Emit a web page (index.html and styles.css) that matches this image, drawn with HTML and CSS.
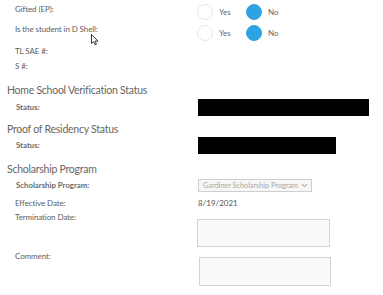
FILE: index.html
```html
<!DOCTYPE html>
<html>
<head>
<meta charset="utf-8">
<link rel="stylesheet" href="styles.css">
</head>
<body>
<div class="page">
  <div class="row row-gifted">
    <div class="label">Gifted (EP):</div>
    <div class="radios">
      <span class="radio"></span><span class="opt">Yes</span>
      <span class="radio on"></span><span class="opt">No</span>
    </div>
  </div>
  <div class="row row-shell">
    <div class="label">Is the student in D Shell:</div>
    <div class="radios">
      <span class="radio"></span><span class="opt">Yes</span>
      <span class="radio on"></span><span class="opt">No</span>
    </div>
  </div>
  <div class="row row-small"><div class="label">TL SAE #:</div></div>
  <div class="row row-small"><div class="label">S #:</div></div>

  <h2 class="heading h-home">Home School Verification Status</h2>
  <div class="row row-status s1">
    <div class="label bold">Status:</div>
    <div class="redact r1"></div>
  </div>

  <h2 class="heading h-proof">Proof of Residency Status</h2>
  <div class="row row-status s2">
    <div class="label bold">Status:</div>
    <div class="redact r2"></div>
  </div>

  <h2 class="heading h-schol">Scholarship Program</h2>
  <div class="row row-prog">
    <div class="label bold">Scholarship Program:</div>
    <div class="select"><span>Gardiner Scholarship Program</span><svg class="chev" width="7" height="5" viewBox="0 0 7 5"><path d="M1 1.2 L3.5 3.6 L6 1.2" fill="none" stroke="#888" stroke-width="1"/></svg></div>
  </div>
  <div class="row row-eff">
    <div class="label">Effective Date:</div>
    <div class="value">8/19/2021</div>
  </div>
  <div class="row row-term">
    <div class="label">Termination Date:</div>
    <div class="box b1"></div>
  </div>
  <div class="row row-comment">
    <div class="label">Comment:</div>
    <div class="box b2"></div>
  </div>

  <svg class="cursor" width="9" height="12" viewBox="0 0 9 12"><path d="M0.5 0.5 L0.5 9.5 L2.6 7.6 L4 10.8 L5.4 10.2 L4.1 7.1 L7 7.1 Z" fill="#fff" stroke="#222" stroke-width="0.9" stroke-linejoin="round"/></svg>
</div>
</body>
</html>
```

FILE: styles.css
```css
* { box-sizing: border-box; }
html, body { margin: 0; padding: 0; background: #fff; }
body {
  font-family: Lato, "Open Sans", "Liberation Sans", sans-serif;
  color: #5a5a5a;
  width: 383px;
  height: 295px;
  overflow: hidden;
}
.page { position: relative; }

.row { display: flex; align-items: flex-start; }
.label {
  width: 198px;
  padding-left: 15px;
  font-size: 8px;
  line-height: 10px;
  color: #606060;
  letter-spacing: -0.1px;
}
.label.bold { font-weight: 700; font-size: 7.8px; padding-left: 16px; color: #6a6a6a; letter-spacing: 0; }

.row-gifted { height: 22px; }
.row-gifted .label { padding-top: 4px; }
.row-gifted .radios { margin-top: 4px; }
.row-shell { height: 22px; }
.row-shell .label { padding-top: 2px; }
.row-shell .radios { margin-top: 3px; }
.row-small { height: 15px; }
.row-small .label { padding-top: 2px; }

.radios { display: flex; align-items: center; margin-left: -1px; }
.radio {
  width: 16px; height: 16px; border-radius: 50%;
  border: 1px solid #e6e6e6; background: #fff;
}
.radio.on { background: #2ea3e4; border-color: #2ea3e4; }
.opt { font-size: 8px; color: #666; margin-left: 6px; width: 27px; }

.heading {
  margin: 0;
  padding-left: 7px;
  font-weight: 400;
  font-size: 10.5px;
  line-height: 14px;
  color: #666;
  letter-spacing: -0.25px;
}
.h-home { margin-top: 9px; }
.h-proof { margin-top: 6px; }
.h-schol { margin-top: 8px; }

.row-status { height: 17px; align-items: center; }
.row-status .label { line-height: 17px; }
.s1 { margin-top: 2px; }
.s2 { margin-top: 1px; }
.redact { height: 17px; background: #000; }
.r1 { width: 171px; }
.r2 { width: 138px; }

.row-prog { margin-top: 3px; height: 13px; }
.row-prog .label { padding-top: 1px; }
.select {
  width: 114px; height: 13px;
  border: 1px solid #cfcfcf; background: #f7f7f7;
  display: flex; align-items: center; justify-content: space-between;
  padding: 0 3px 0 4px;
  font-size: 7.5px; color: #a8a8a8; letter-spacing: -0.1px;
}
.chev { display: block; }

.row-eff { margin-top: 6px; }
.value { font-size: 8px; line-height: 10px; color: #555; }

.row-term { margin-top: 4px; }
.b1 { margin-top: 7px; margin-left: -1px; width: 133px; height: 28px; }
.row-comment { margin-top: 4px; }
.b2 { margin-top: 6px; margin-left: 1px; width: 132px; height: 29px; }
.box { border: 1px solid #d4d4d4; background: #fafafa; }

.cursor { position: absolute; left: 91px; top: 34px; }
```
